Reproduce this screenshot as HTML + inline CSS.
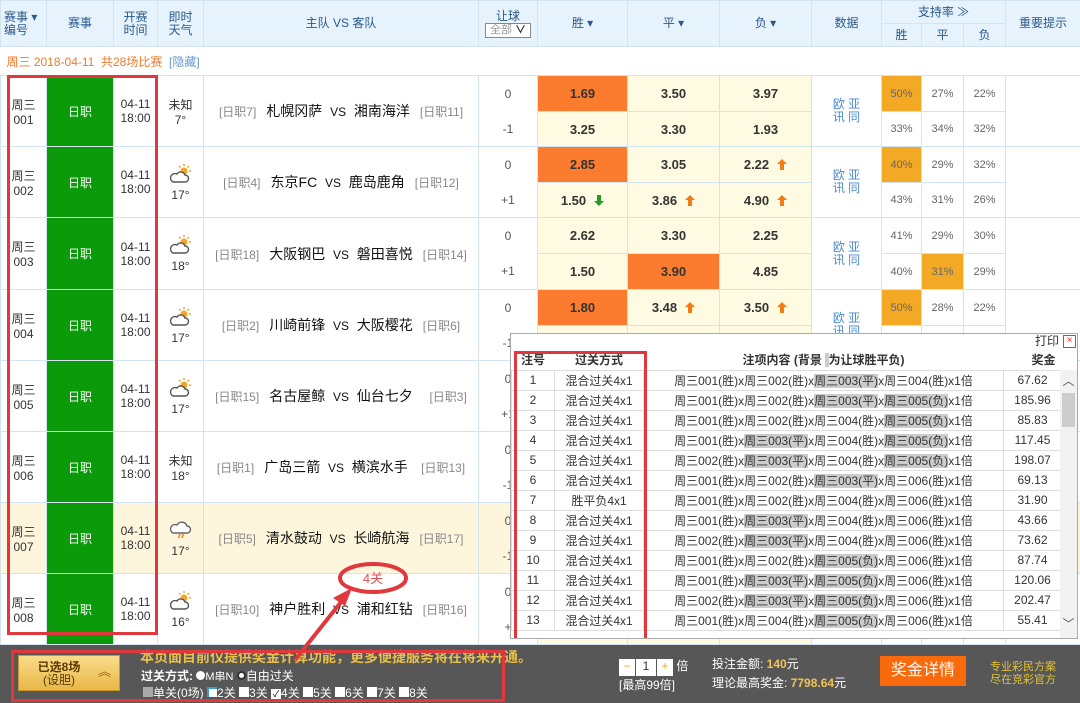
<!DOCTYPE html>
<html><head><meta charset="utf-8">
<style>
*{margin:0;padding:0;box-sizing:border-box}
body{width:1080px;height:703px;overflow:hidden;position:relative;background:#fff;font-family:"Liberation Sans","Noto Sans CJK SC",sans-serif;font-size:12px;color:#333}
table{border-collapse:collapse;table-layout:fixed}
#main td{border:1px solid #d3e3f0;text-align:center;vertical-align:middle;padding:0}
#main .hd td{background:#e6f2fc;color:#2a5a8a;font-size:12px;line-height:13px}
.g{background:#0a9a0a!important;color:#fff}
.od{background:#fffbe3;font-weight:bold;font-size:13px;color:#333}
.or{background:#fb7b2f!important}
.sp{color:#666;font-size:11px}
.so{background:#f3a924!important}
.tm{font-size:14px;color:#111}
.lg{color:#888;font-size:12px}
.rq{color:#555}
.dl{color:#4a8ad0;font-size:12px;line-height:13px}
.ar{display:inline-block;width:10px;height:11px;margin-left:8px;vertical-align:-1px}
.y td{background:#fdf6dc}
#pop{position:absolute;left:510px;top:333px;width:568px;height:306px;background:#fff;border:1px solid #aaa;overflow:hidden}
#pop table td{border:1px solid #ddd;text-align:center;height:20px;font-size:12px;color:#333;padding:0;white-space:nowrap}
.h{background:#ccc}
#bar{position:absolute;left:0;top:645px;width:1080px;height:58px;background:#575757;color:#fff}
</style></head><body>
<svg width="0" height="0" style="position:absolute"><defs>
<symbol id="up" viewBox="0 0 10 11"><path d="M5 0L10 5H7V11H3V5H0Z" fill="#f47a14"/></symbol>
<symbol id="dn" viewBox="0 0 10 11"><path d="M5 11L10 6H7V0H3V6H0Z" fill="#23a023"/></symbol>
<symbol id="sc" viewBox="0 0 24 22"><g stroke="#f5a623" stroke-width="1.5"><path d="M15 1v2M20 3l-1.5 1.5M22 8h-2M10 3l1.5 1.5"/></g><circle cx="15" cy="8" r="3.5" fill="#f5a623"/><path d="M4 19h12a3.5 3.5 0 0 0 0-7 4.5 4.5 0 0 0-8-1 4 4 0 0 0-4 8z" fill="#fff" stroke="#555" stroke-width="1.4"/></symbol>
</defs></svg>
<table id="main" style="width:1080px">
<colgroup><col width="46"><col width="67"><col width="44"><col width="46"><col width="275"><col width="59"><col width="90"><col width="92"><col width="92"><col width="70"><col width="40"><col width="42"><col width="42"><col width="75"></colgroup>
<tr class="hd" style="height:23px"><td rowspan="2" style="text-align:left;padding-left:3px">赛事 ▾<br>编号</td><td rowspan="2">赛事</td><td rowspan="2">开赛<br>时间</td><td rowspan="2">即时<br>天气</td><td rowspan="2">主队 VS 客队</td><td rowspan="2">让球<br><span style="display:inline-block;border:1px solid #888;background:#fff;color:#999;width:46px;height:15px;font-size:11px;line-height:13px">全部 <b style="color:#333">∨</b></span></td><td rowspan="2">胜 ▾</td><td rowspan="2">平 ▾</td><td rowspan="2">负 ▾</td><td rowspan="2">数据</td><td colspan="3">支持率 ≫</td><td rowspan="2">重要提示</td></tr>
<tr class="hd" style="height:23px"><td>胜</td><td>平</td><td>负</td></tr>
<tr style="height:29px"><td colspan="14" style="text-align:left;padding-left:6px;color:#f07a2a;border-left:none;border-right:none">周三 2018-04-11 &nbsp;共28场比赛 &nbsp;<span style="color:#6a9ad0">[隐藏]</span></td></tr>
<!-- 1 -->
<tr style="height:36px"><td rowspan="2">周三<br>001</td><td rowspan="2" class="g">日职</td><td rowspan="2">04-11<br>18:00</td><td rowspan="2">未知<br>7°</td><td rowspan="2"><span class="lg">[日职7]</span>&nbsp;&nbsp; <span class="tm">札幌冈萨 &nbsp;<span style="font-size:12px">VS</span>&nbsp; 湘南海洋</span> &nbsp;&nbsp;<span class="lg">[日职11]</span></td><td class="rq" style="border-bottom:none">0</td><td class="od or">1.69</td><td class="od">3.50</td><td class="od">3.97</td><td rowspan="2" class="dl">欧 亚<br>讯 同</td><td class="sp so">50%</td><td class="sp">27%</td><td class="sp">22%</td><td rowspan="2"></td></tr>
<tr style="height:35px"><td class="rq" style="border-top:none">-1</td><td class="od">3.25</td><td class="od">3.30</td><td class="od">1.93</td><td class="sp">33%</td><td class="sp">34%</td><td class="sp">32%</td></tr>
<!-- 2 -->
<tr style="height:36px"><td rowspan="2">周三<br>002</td><td rowspan="2" class="g">日职</td><td rowspan="2">04-11<br>18:00</td><td rowspan="2"><svg width="24" height="22"><use href="#sc"/></svg><br>17°</td><td rowspan="2"><span class="lg">[日职4]</span>&nbsp;&nbsp; <span class="tm">东京FC &nbsp;<span style="font-size:12px">VS</span>&nbsp; 鹿岛鹿角</span> &nbsp;&nbsp;<span class="lg">[日职12]</span></td><td class="rq" style="border-bottom:none">0</td><td class="od or">2.85</td><td class="od">3.05</td><td class="od">2.22<svg class="ar"><use href="#up"/></svg></td><td rowspan="2" class="dl">欧 亚<br>讯 同</td><td class="sp so">40%</td><td class="sp">29%</td><td class="sp">32%</td><td rowspan="2"></td></tr>
<tr style="height:35px"><td class="rq" style="border-top:none">+1</td><td class="od">1.50<svg class="ar"><use href="#dn"/></svg></td><td class="od">3.86<svg class="ar"><use href="#up"/></svg></td><td class="od">4.90<svg class="ar"><use href="#up"/></svg></td><td class="sp">43%</td><td class="sp">31%</td><td class="sp">26%</td></tr>
<!-- 3 -->
<tr style="height:36px"><td rowspan="2">周三<br>003</td><td rowspan="2" class="g">日职</td><td rowspan="2">04-11<br>18:00</td><td rowspan="2"><svg width="24" height="22"><use href="#sc"/></svg><br>18°</td><td rowspan="2"><span class="lg">[日职18]</span>&nbsp;&nbsp; <span class="tm">大阪钢巴 &nbsp;<span style="font-size:12px">VS</span>&nbsp; 磐田喜悦</span> &nbsp;&nbsp;<span class="lg">[日职14]</span></td><td class="rq" style="border-bottom:none">0</td><td class="od">2.62</td><td class="od">3.30</td><td class="od">2.25</td><td rowspan="2" class="dl">欧 亚<br>讯 同</td><td class="sp">41%</td><td class="sp">29%</td><td class="sp">30%</td><td rowspan="2"></td></tr>
<tr style="height:36px"><td class="rq" style="border-top:none">+1</td><td class="od">1.50</td><td class="od or">3.90</td><td class="od">4.85</td><td class="sp">40%</td><td class="sp so">31%</td><td class="sp">29%</td></tr>
<!-- 4 -->
<tr style="height:36px"><td rowspan="2">周三<br>004</td><td rowspan="2" class="g">日职</td><td rowspan="2">04-11<br>18:00</td><td rowspan="2"><svg width="24" height="22"><use href="#sc"/></svg><br>17°</td><td rowspan="2"><span class="lg">[日职2]</span>&nbsp;&nbsp; <span class="tm">川崎前锋 &nbsp;<span style="font-size:12px">VS</span>&nbsp; 大阪樱花</span> &nbsp;&nbsp;<span class="lg">[日职6]</span></td><td class="rq" style="border-bottom:none">0</td><td class="od or">1.80</td><td class="od">3.48<svg class="ar"><use href="#up"/></svg></td><td class="od">3.50<svg class="ar"><use href="#up"/></svg></td><td rowspan="2" class="dl">欧 亚<br>讯 同</td><td class="sp so">50%</td><td class="sp">28%</td><td class="sp">22%</td><td rowspan="2"></td></tr>
<tr style="height:35px"><td class="rq" style="border-top:none">-1</td><td class="od"></td><td class="od"></td><td class="od"></td><td class="sp"></td><td class="sp"></td><td class="sp"></td></tr>
<!-- 5 -->
<tr style="height:36px"><td rowspan="2">周三<br>005</td><td rowspan="2" class="g">日职</td><td rowspan="2">04-11<br>18:00</td><td rowspan="2"><svg width="24" height="22"><use href="#sc"/></svg><br>17°</td><td rowspan="2"><span class="lg">[日职15]</span>&nbsp;&nbsp; <span class="tm">名古屋鲸 &nbsp;<span style="font-size:12px">VS</span>&nbsp; 仙台七夕</span> &nbsp;&nbsp;&nbsp;&nbsp;<span class="lg">[日职3]</span></td><td class="rq" style="border-bottom:none">0</td><td class="od"></td><td class="od"></td><td class="od"></td><td rowspan="2"></td><td></td><td></td><td></td><td rowspan="2"></td></tr>
<tr style="height:35px"><td class="rq" style="border-top:none">+1</td><td class="od"></td><td class="od"></td><td class="od"></td><td></td><td></td><td></td></tr>
<!-- 6 -->
<tr style="height:36px"><td rowspan="2">周三<br>006</td><td rowspan="2" class="g">日职</td><td rowspan="2">04-11<br>18:00</td><td rowspan="2">未知<br>18°</td><td rowspan="2"><span class="lg">[日职1]</span>&nbsp;&nbsp; <span class="tm">广岛三箭 &nbsp;<span style="font-size:12px">VS</span>&nbsp; 横滨水手</span> &nbsp;&nbsp;&nbsp;<span class="lg">[日职13]</span></td><td class="rq" style="border-bottom:none">0</td><td class="od"></td><td class="od"></td><td class="od"></td><td rowspan="2"></td><td></td><td></td><td></td><td rowspan="2"></td></tr>
<tr style="height:35px"><td class="rq" style="border-top:none">-1</td><td class="od"></td><td class="od"></td><td class="od"></td><td></td><td></td><td></td></tr>
<!-- 7 -->
<tr class="y" style="height:36px"><td rowspan="2">周三<br>007</td><td rowspan="2" class="g">日职</td><td rowspan="2">04-11<br>18:00</td><td rowspan="2"><svg width="24" height="22" viewBox="0 0 24 22"><path d="M4 14h14a3.5 3.5 0 0 0 0-7 5.5 5.5 0 0 0-10-1 4 4 0 0 0-4 8z" fill="#fff" stroke="#666" stroke-width="1.4"/><path d="M11 15l-1.5 4M14.5 15l-1.5 4" stroke="#f08020" stroke-width="1.5"/></svg><br>17°</td><td rowspan="2"><span class="lg">[日职5]</span>&nbsp;&nbsp; <span class="tm">清水鼓动 &nbsp;<span style="font-size:12px">VS</span>&nbsp; 长崎航海</span> &nbsp;&nbsp;<span class="lg">[日职17]</span></td><td class="rq" style="border-bottom:none">0</td><td></td><td></td><td></td><td rowspan="2"></td><td></td><td></td><td></td><td rowspan="2"></td></tr>
<tr class="y" style="height:35px"><td class="rq" style="border-top:none">-1</td><td></td><td></td><td></td><td></td><td></td><td></td></tr>
<!-- 8 -->
<tr style="height:36px"><td rowspan="2">周三<br>008</td><td rowspan="2" class="g">日职</td><td rowspan="2">04-11<br>18:00</td><td rowspan="2"><svg width="24" height="22"><use href="#sc"/></svg><br>16°</td><td rowspan="2"><span class="lg">[日职10]</span>&nbsp;&nbsp; <span class="tm">神户胜利 &nbsp;<span style="font-size:12px">VS</span>&nbsp; 浦和红钻</span> &nbsp;&nbsp;<span class="lg">[日职16]</span></td><td class="rq" style="border-bottom:none">0</td><td class="od"></td><td class="od"></td><td class="od"></td><td rowspan="2"></td><td></td><td></td><td></td><td rowspan="2"></td></tr>
<tr style="height:35px"><td class="rq" style="border-top:none">+</td><td class="od"></td><td class="od"></td><td class="od"></td><td></td><td></td><td></td></tr>
</table>

<div style="position:absolute;left:7px;top:75px;width:151px;height:560px;border:3px solid #e0383c"></div>

<div id="pop">
<div style="height:16px;text-align:right;padding-right:18px;font-size:12px;line-height:15px;color:#333">打印<span style="position:absolute;right:1px;top:1px;width:13px;height:13px;border:1px solid #e0383c;color:#e0383c;font-size:10px;line-height:10px;text-align:center">×</span></div>
<table style="width:550px">
<colgroup><col width="43"><col width="89"><col width="360"><col width="58"></colgroup>
<tr style="font-weight:bold"><td style="border:none">注号</td><td style="border:none">过关方式</td><td style="border:none">注项内容 (背景 <span class="h">&nbsp;</span>为让球胜平负)</td><td style="border:none;text-align:right;padding-right:6px">奖金</td></tr>
<tr><td>1</td><td>混合过关4x1</td><td>周三001(胜)x周三002(胜)x<span class="h">周三003(平)</span>x周三004(胜)x1倍</td><td>67.62</td></tr>
<tr><td>2</td><td>混合过关4x1</td><td>周三001(胜)x周三002(胜)x<span class="h">周三003(平)</span>x<span class="h">周三005(负)</span>x1倍</td><td>185.96</td></tr>
<tr><td>3</td><td>混合过关4x1</td><td>周三001(胜)x周三002(胜)x周三004(胜)x<span class="h">周三005(负)</span>x1倍</td><td>85.83</td></tr>
<tr><td>4</td><td>混合过关4x1</td><td>周三001(胜)x<span class="h">周三003(平)</span>x周三004(胜)x<span class="h">周三005(负)</span>x1倍</td><td>117.45</td></tr>
<tr><td>5</td><td>混合过关4x1</td><td>周三002(胜)x<span class="h">周三003(平)</span>x周三004(胜)x<span class="h">周三005(负)</span>x1倍</td><td>198.07</td></tr>
<tr><td>6</td><td>混合过关4x1</td><td>周三001(胜)x周三002(胜)x<span class="h">周三003(平)</span>x周三006(胜)x1倍</td><td>69.13</td></tr>
<tr><td>7</td><td>胜平负4x1</td><td>周三001(胜)x周三002(胜)x周三004(胜)x周三006(胜)x1倍</td><td>31.90</td></tr>
<tr><td>8</td><td>混合过关4x1</td><td>周三001(胜)x<span class="h">周三003(平)</span>x周三004(胜)x周三006(胜)x1倍</td><td>43.66</td></tr>
<tr><td>9</td><td>混合过关4x1</td><td>周三002(胜)x<span class="h">周三003(平)</span>x周三004(胜)x周三006(胜)x1倍</td><td>73.62</td></tr>
<tr><td>10</td><td>混合过关4x1</td><td>周三001(胜)x周三002(胜)x<span class="h">周三005(负)</span>x周三006(胜)x1倍</td><td>87.74</td></tr>
<tr><td>11</td><td>混合过关4x1</td><td>周三001(胜)x<span class="h">周三003(平)</span>x<span class="h">周三005(负)</span>x周三006(胜)x1倍</td><td>120.06</td></tr>
<tr><td>12</td><td>混合过关4x1</td><td>周三002(胜)x<span class="h">周三003(平)</span>x<span class="h">周三005(负)</span>x周三006(胜)x1倍</td><td>202.47</td></tr>
<tr><td>13</td><td>混合过关4x1</td><td>周三001(胜)x周三004(胜)x<span class="h">周三005(负)</span>x周三006(胜)x1倍</td><td>55.41</td></tr>
</table>
<div style="position:absolute;right:0;top:36px;width:17px;height:268px;background:#f2f2f2"><div style="text-align:center;color:#555;font-size:12px;margin-top:2px">︿</div><div style="margin:4px 2px;height:34px;background:#cdcdcd"></div><div style="position:absolute;bottom:6px;width:17px;text-align:center;color:#555">﹀</div></div>
<div style="position:absolute;left:3px;top:17px;width:133px;height:290px;border:3px solid #e0383c"></div>
</div>

<div id="bar">
<div style="position:absolute;left:18px;top:10px;width:102px;height:36px;background:linear-gradient(#f9dc8a,#e9b748);border:1px solid #c9972e;color:#5a3a00;font-size:12px;line-height:13px;text-align:center;padding:5px 20px 0 0"><b>已选8场</b><br>(设胆)<span style="position:absolute;right:8px;top:9px;color:#a0650a;font-size:13px">︽</span></div>
<div style="position:absolute;left:140px;top:2px;color:#e8c04a;font-size:14px;font-weight:bold">本页面目前仅提供奖金计算功能，更多便捷服务将在将来开通。</div>
<div style="position:absolute;left:141px;top:22px;font-size:12px"><b>过关方式:</b> <span style="display:inline-block;width:9px;height:9px;border-radius:50%;background:#fff"></span><span style="font-size:11px">M串N</span> <span style="display:inline-block;width:9px;height:9px;border-radius:50%;background:#fff;border:2px solid #333"></span>自由过关</div>
<div style="position:absolute;left:143px;top:39px;font-size:12px;white-space:nowrap"><span style="display:inline-block;width:10px;height:10px;background:#aaa"></span>单关(0场) <span style="display:inline-block;width:10px;height:10px;background:#fff;border-left:2px solid #3a9ad8;border-top:2px solid #3a9ad8"></span>2关 <span style="display:inline-block;width:10px;height:10px;background:#fff"></span>3关 <span style="display:inline-block;width:10px;height:10px;background:#fff;color:#000;font-size:9px;line-height:10px;text-align:center">✓</span>4关 <span style="display:inline-block;width:10px;height:10px;background:#fff"></span>5关 <span style="display:inline-block;width:10px;height:10px;background:#fff"></span>6关 <span style="display:inline-block;width:10px;height:10px;background:#fff"></span>7关 <span style="display:inline-block;width:10px;height:10px;background:#fff"></span>8关</div>
<div style="position:absolute;left:11px;top:5px;width:494px;height:52px;border:3px solid #e0383c"></div>
<div style="position:absolute;left:619px;top:12px;font-size:12px;white-space:nowrap"><span style="display:inline-block;width:16px;height:17px;background:#fff;color:#f5a623;text-align:center">−</span><span style="display:inline-block;width:20px;height:17px;background:#fff;color:#333;text-align:center;margin:0 1px">1</span><span style="display:inline-block;width:16px;height:17px;background:#fff;color:#f5a623;text-align:center">+</span> 倍<br>[最高99倍]</div>
<div style="position:absolute;left:712px;top:10px;font-size:12px;line-height:19px">投注金额: <b style="color:#f3c350">140</b>元<br>理论最高奖金: <b style="color:#f3c350">7798.64</b>元</div>
<div style="position:absolute;left:880px;top:11px;width:86px;height:30px;background:#f86a0c;color:#fff;font-size:16px;line-height:30px;text-align:center">奖金详情</div>
<div style="position:absolute;left:990px;top:16px;color:#e6c431;font-size:11px;line-height:13px">专业彩民方案<br>尽在竞彩官方</div>
</div>

<svg style="position:absolute;left:0;top:0" width="1080" height="703">
<ellipse cx="373" cy="578" rx="33" ry="14" fill="none" stroke="#e0383c" stroke-width="4"/>
<text x="373" y="583" fill="#e05050" font-size="13" text-anchor="middle" font-family="Liberation Sans,Noto Sans CJK SC,sans-serif">4关</text>
<path d="M295 660 L345 597" stroke="#e0383c" stroke-width="4"/>
<path d="M352 588 L333 598 L345 606 Z" fill="#e0383c"/>
</svg>
</body></html>
